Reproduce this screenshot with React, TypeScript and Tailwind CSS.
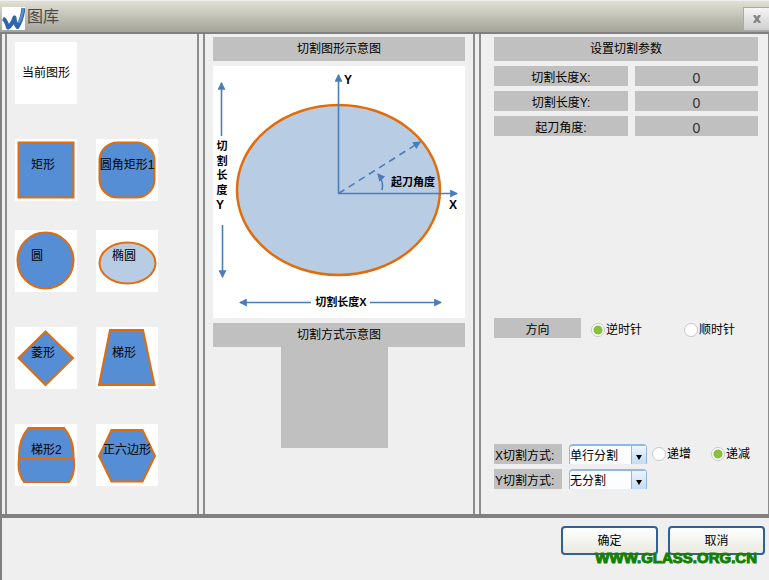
import type { ReactNode } from "react";

const STROKE = "#e36c0a";
const BLUE = "#558ed5";
const PALE = "#b8cce4";
const LINE = "#4a7ebb";

interface TileProps {
  label: string;
  labelClass?: string;
  children: ReactNode;
}

const Tile = ({ label, labelClass = "justify-self-start pl-4", children }: TileProps) => (
  <button type="button" className="grid size-[62px] bg-white text-xs">
    <svg viewBox="0 0 62 62" className="col-start-1 row-start-1 size-full" stroke={STROKE} strokeWidth="2" fill={BLUE}>
      {children}
    </svg>
    <span className={`col-start-1 row-start-1 pt-4 whitespace-nowrap leading-5 ${labelClass}`}>{label}</span>
  </button>
);

const Heading = ({ children }: { children: ReactNode }) => (
  <h2 className="h-6 bg-[#c0c0c0] text-center leading-6">{children}</h2>
);

interface RadioProps {
  name: string;
  label: string;
  checked?: boolean;
}

const Radio = ({ name, label, checked }: RadioProps) => (
  <label className="flex items-center gap-px whitespace-nowrap">
    <input
      type="radio"
      name={name}
      defaultChecked={checked}
      className="size-[14px] appearance-none rounded-full border border-[#c4c8cc] bg-white checked:bg-[radial-gradient(circle,#8cc63f_0,#84bd38_4px,white_5px)]"
    />
    {label}
  </label>
);

interface ParamProps {
  id: string;
  label: string;
}

const Param = ({ id, label }: ParamProps) => (
  <div className="grid grid-cols-[134fr_123fr] gap-[7px]">
    <label htmlFor={id} className="h-5 bg-[#c0c0c0] pt-0.5 text-center leading-5">
      {label}
    </label>
    <input id={id} defaultValue="0" className="h-5 w-full min-w-0 bg-[#c0c0c0] pt-1 text-center text-sm text-[#333]" />
  </div>
);

interface ModeProps {
  id: string;
  label: string;
  options: string[];
  children?: ReactNode;
}

const Mode = ({ id, label, options, children }: ModeProps) => (
  <div className="flex items-center">
    <label htmlFor={id} className="mr-[7px] h-5 w-[68px] bg-[#c0c0c0] pt-0.5 pl-px leading-5 whitespace-nowrap">
      {label}
    </label>
    <div className="relative">
      <select
        id={id}
        className="block h-5 w-[78px] appearance-none rounded-t-sm border border-t-2 border-b-0 border-[#8fb8ea] bg-[#fbfdff] leading-5"
      >
        {options.map((o) => (
          <option key={o}>{o}</option>
        ))}
      </select>
      <span className="pointer-events-none absolute top-0.5 right-px bottom-0 flex w-[15px] items-center justify-center border-l border-[#8fb8ea] bg-linear-to-b from-[#eef5fd] to-[#c3dcf5]">
        <svg viewBox="0 0 6 5" className="mt-1 h-[5px] w-[6px]">
          <path d="M0 0h6L3 5z" />
        </svg>
      </span>
    </div>
    {children}
  </div>
);

const Diagram = () => (
  <svg viewBox="0 0 252 252" className="w-full bg-white text-xs font-bold" role="img" aria-label="切割图形示意图">
    <defs>
      <marker id="arrow" viewBox="0 0 7 7" refX="6" refY="3.5" markerWidth="8" markerHeight="8" markerUnits="userSpaceOnUse" orient="auto">
        <path d="M0 0L7 3.5L0 7z" fill={LINE} />
      </marker>
    </defs>
    <ellipse cx="125.5" cy="124" rx="101.5" ry="85" fill={PALE} stroke={STROKE} strokeWidth="2.5" />
    <g fill="none" stroke={LINE} strokeWidth="1.6">
      <path d="M125.5 127.5V9" markerEnd="url(#arrow)" />
      <path d="M125 127.5H244" markerEnd="url(#arrow)" />
      <path d="M125.5 127.5L207 76" strokeDasharray="7 5" markerEnd="url(#arrow)" />
      <path d="M169 124Q171 115 165 108" markerEnd="url(#arrow)" />
      <path d="M8.5 70V17" markerEnd="url(#arrow)" />
      <path d="M9.5 159V211" markerEnd="url(#arrow)" />
      <path d="M98 236.5H27" markerEnd="url(#arrow)" />
      <path d="M157 236.5H228" markerEnd="url(#arrow)" />
    </g>
    <text x="131" y="18">Y</text>
    <text x="236" y="143">X</text>
    <text x="178" y="120" fontSize="11">起刀角度</text>
    <g fontSize="11" textAnchor="middle">
      <text x="9" y="84">切</text>
      <text x="9" y="99">割</text>
      <text x="9" y="113">长</text>
      <text x="9" y="128">度</text>
      <text x="7" y="143" fontSize="12">Y</text>
      <text x="128" y="240">切割长度X</text>
    </g>
  </svg>
);

const App = () => {
  return (
    <div className="flex min-h-screen flex-col bg-[#efefef] pt-px font-['Liberation_Sans','Noto_Sans_CJK_SC',sans-serif] text-xs text-black">
      <header className="flex h-[33px] items-center border-b-2 border-[#808080] bg-linear-to-b from-[#e0e0d5] to-[#a4a598] pl-0.5">
        <svg viewBox="0 0 23 23" className="mt-1 size-[23px] bg-white" fill="none" strokeLinejoin="round">
          <path d="M1 11.5Q4 13 6 20.5Q10 18 12.5 10.5Q13 17 15.5 20Q20 13 21.5 1" stroke="#2d66aa" strokeWidth="4" />
          <path d="M21.5 1Q20 10 17 16" stroke="#5d92c8" strokeWidth="2" />
        </svg>
        <h1 className="ml-0.5 text-base text-[#4a4a48]">图库</h1>
        <button
          type="button"
          aria-label="关闭"
          className="mt-1 ml-auto flex h-6 w-[26px] items-center justify-center border border-r-0 border-[#aaa] bg-linear-to-b from-[#f5f5f5] to-[#cfcfcf] text-[#858585]"
        >
          <svg viewBox="0 0 8 8" className="size-2" stroke="currentColor" strokeWidth="2.5">
            <path d="M1 0L7 8M7 0L1 8" />
          </svg>
        </button>
      </header>

      <div className="flex grow flex-col border-l-2 border-[#808080]">
        <main className="grid grid-cols-[194fr_272fr_290fr] gap-1 border-b-4 border-[#808080] pl-[3px]">
          <section className="border-x-2 border-[#8c8c8c] px-2 pt-2 pb-7">
            <div className="flex size-[62px] items-center justify-center bg-white whitespace-nowrap">当前图形</div>
            <div className="mt-[35px] flex gap-[19px]">
              <Tile label="矩形">
                <rect x="3.5" y="3.5" width="55" height="55" />
              </Tile>
              <Tile label="圆角矩形1" labelClass="justify-self-center">
                <rect x="3.5" y="3.5" width="55" height="55" rx="18" />
              </Tile>
            </div>
            <div className="mt-[29px] grid grid-cols-[62px_62px] gap-x-[19px] gap-y-[35px]">
              <Tile label="圆">
                <circle cx="30.5" cy="30.5" r="28" />
              </Tile>
              <Tile label="椭圆">
                <ellipse cx="31.5" cy="33" rx="28" ry="20.5" fill={PALE} />
              </Tile>
              <Tile label="菱形">
                <path d="M30.5 4.5L58 31L30.5 58L3.5 31Z" />
              </Tile>
              <Tile label="梯形">
                <path d="M14 3H47L58.5 58H3Z" />
              </Tile>
              <Tile label="梯形2">
                <path d="M13.5 4H49Q59 16 58.5 32Q61 50 54 58H9Q2 48 4 35Q3 16 13.5 4Z" />
                <path d="M4 35H59" />
              </Tile>
              <Tile label="正六边形" labelClass="justify-self-center">
                <path d="M15.5 6H46.5L59 32L46.5 57.5H15.5L3 32Z" />
              </Tile>
            </div>
          </section>

          <section className="flex flex-col gap-[5px] border-x-2 border-[#8c8c8c] px-2 pt-[3px]">
            <Heading>切割图形示意图</Heading>
            <Diagram />
            <div>
              <Heading>切割方式示意图</Heading>
              <div className="ml-[68px] h-[101px] w-[107px] bg-[#c0c0c0]" />
            </div>
          </section>

          <section className="flex flex-col border-r border-l-2 border-[#8c8c8c] pt-[3px] pr-[10px] pb-[25px] pl-[13px]">
            <div className="flex flex-col gap-[5px]">
              <Heading>设置切割参数</Heading>
              <Param id="length-x" label="切割长度X:" />
              <Param id="length-y" label="切割长度Y:" />
              <Param id="angle" label="起刀角度:" />
            </div>
            <div role="radiogroup" aria-labelledby="direction" className="mt-[182px] flex items-start">
              <span id="direction" className="mr-[10px] h-5 w-[87px] bg-[#c0c0c0] pt-0.5 text-center leading-5">
                方向
              </span>
              <div className="flex gap-[42px] pt-1">
                <Radio name="direction" label="逆时针" checked />
                <Radio name="direction" label="顺时针" />
              </div>
            </div>
            <div className="mt-auto flex flex-col gap-[5px]">
              <Mode id="mode-x" label="X切割方式:" options={["单行分割", "无分割"]}>
                <div role="radiogroup" aria-label="X切割方式" className="ml-[5px] flex gap-5">
                  <Radio name="order" label="递增" />
                  <Radio name="order" label="递减" checked />
                </div>
              </Mode>
              <Mode id="mode-y" label="Y切割方式:" options={["无分割", "单行分割"]} />
            </div>
          </section>
        </main>

        <footer className="relative flex justify-end gap-[10px] pt-2 pr-1 pb-6">
          {["确定", "取消"].map((text) => (
            <button
              key={text}
              type="button"
              className="h-[29px] w-[97px] rounded-[4px] border-2 border-[#2f6098] bg-linear-to-b from-white to-[#e9e9e0]"
            >
              {text}
            </button>
          ))}
          <span className="pointer-events-none absolute top-[31px] right-3 text-[15px] leading-[18px] font-bold text-[#138000] [-webkit-text-stroke:1px_#138000]">
            WWW.GLASS.ORG.CN
          </span>
        </footer>
      </div>
    </div>
  );
};

export default App;
